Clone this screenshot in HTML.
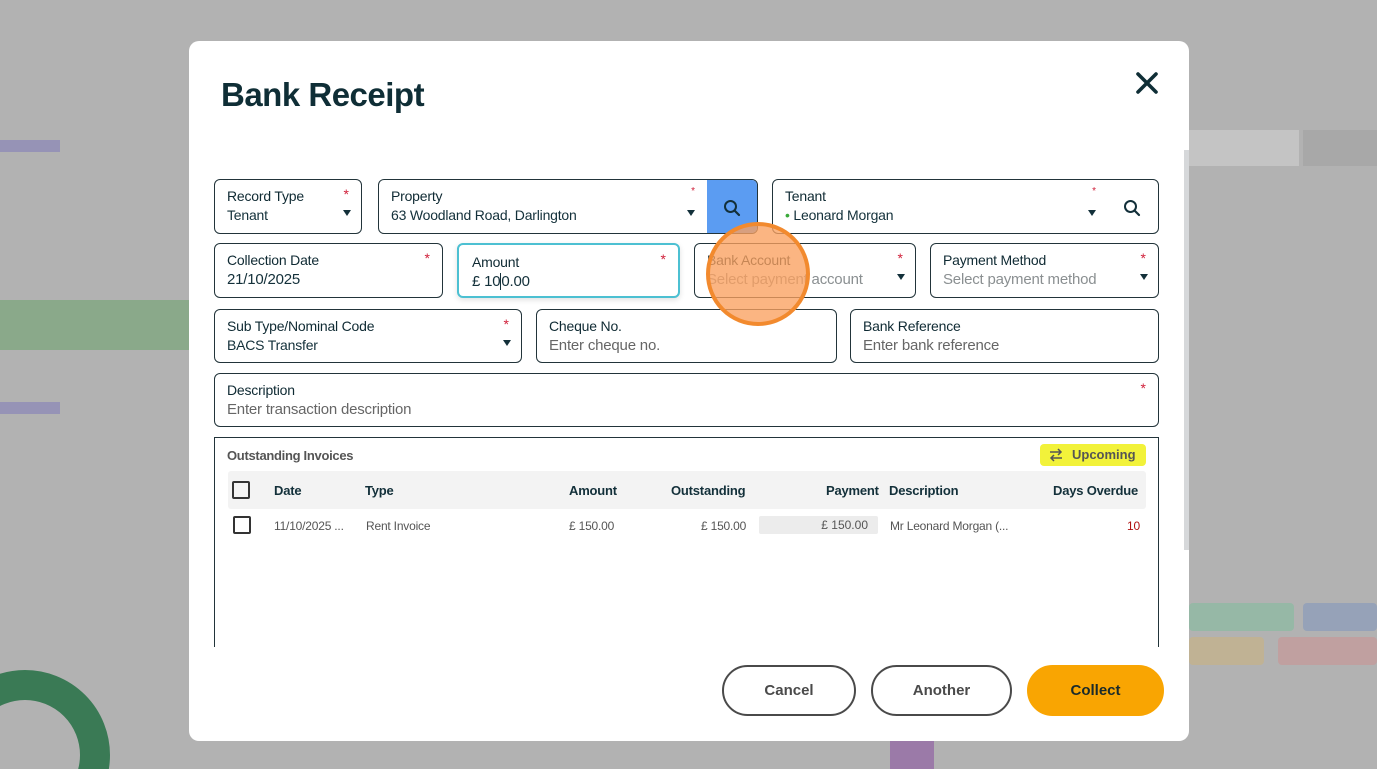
<!DOCTYPE html>
<html><head><meta charset="utf-8"><style>
*{box-sizing:border-box;margin:0;padding:0}
html,body{width:1377px;height:769px;overflow:hidden}
body{background:#b2b2b2;font-family:"Liberation Sans",sans-serif;color:#0f2e36}
#w{position:relative;width:1377px;height:769px;overflow:hidden}
.a{position:absolute}
.modal{left:189px;top:41px;width:1000px;height:700px;background:#fff;border-radius:10px}
.f{position:absolute;border:1px solid #22343a;border-radius:6px;background:#fff}
.lb{position:absolute;left:12px;top:8px;font-size:14px;color:#0f2a33;font-weight:500;letter-spacing:-.2px}
.vl{position:absolute;left:12px;top:27px;font-size:14px;color:#13303a;letter-spacing:-.2px}
.ph{color:#8a8f91;font-size:15px}
.st{position:absolute;right:12px;top:6px;color:#d0203a;font-size:14px}
.ar{position:absolute;right:10px;top:30px;width:0;height:0;border-left:4px solid transparent;border-right:4px solid transparent;border-top:6px solid #13303a}
.th{position:absolute;top:483px;font-size:13px;font-weight:bold;color:#13303a;letter-spacing:-.2px}
.td{position:absolute;top:519px;font-size:12px;color:#555;letter-spacing:-.2px}
.btn{position:absolute;top:665px;height:51px;border-radius:26px;border:2px solid #4a4a4a;font-size:15px;font-weight:bold;color:#4a4a4a;text-align:center;line-height:47px}
</style></head><body><div id="w">
<div class="a" style="left:0;top:300px;width:189px;height:50px;background:#8aa98a"></div>
<div class="a" style="left:0;top:140px;width:60px;height:12px;background:#8a86b8;opacity:.7"></div>
<div class="a" style="left:0;top:402px;width:60px;height:12px;background:#8a86b8;opacity:.7"></div>
<svg class="a" style="left:0;top:660px" width="189" height="109" viewBox="0 0 189 109"><circle cx="25" cy="95" r="70" fill="none" stroke="#3a7a55" stroke-width="30"/></svg>
<div class="a" style="left:1189px;top:603px;width:105px;height:28px;background:#96b8a6;border-radius:4px"></div>
<div class="a" style="left:1303px;top:603px;width:74px;height:28px;background:#96a2b8;border-radius:4px"></div>
<div class="a" style="left:1278px;top:637px;width:99px;height:28px;background:#c0a0a0;border-radius:4px"></div>
<div class="a" style="left:1189px;top:637px;width:75px;height:28px;background:#c0b294;border-radius:4px"></div>
<div class="a" style="left:1189px;top:130px;width:110px;height:36px;background:#c4c4c4"></div>
<div class="a" style="left:1303px;top:130px;width:74px;height:36px;background:#a8a8a8"></div>
<div class="a" style="left:890px;top:741px;width:44px;height:28px;background:#9b7aa8"></div>

<div class="a modal"></div>
<div class="a" style="left:1184px;top:150px;width:5px;height:400px;background:#d6d8da"></div>
<div class="a" style="left:221px;top:76px;font-size:33px;font-weight:bold;color:#0f2e36;letter-spacing:-.5px">Bank Receipt</div>
<svg class="a" style="left:1135px;top:71px" width="24" height="24" viewBox="0 0 24 24"><path d="M3 3L21 21M21 3L3 21" stroke="#0f2e36" stroke-width="3.6" stroke-linecap="round"/></svg>

<div class="f" style="left:214px;top:179px;width:148px;height:55px"><div class="lb">Record Type</div><div class="vl">Tenant</div><div class="st">*</div><div class="ar"></div></div>
<div class="f" style="left:378px;top:179px;width:380px;height:55px;overflow:hidden"><div class="lb">Property</div><div class="vl">63 Woodland Road, Darlington</div><div class="st" style="right:62px;font-size:10px">*</div><div class="ar" style="right:62px"></div>
<div class="a" style="right:0;top:0;width:50px;height:55px;background:#5b9cf2"><svg style="position:absolute;left:16px;top:19px" width="18" height="18" viewBox="0 0 18 18"><circle cx="7.5" cy="7.5" r="5.5" fill="none" stroke="#13303a" stroke-width="2"/><path d="M11.5 11.5L16 16" stroke="#13303a" stroke-width="2.2" stroke-linecap="round"/></svg></div></div>
<div class="f" style="left:772px;top:179px;width:387px;height:55px"><div class="lb">Tenant</div><div class="vl"><span style="color:#3aaa3a">•</span> Leonard Morgan</div><div class="st" style="right:62px;font-size:10px">*</div><div class="ar" style="right:62px"></div>
<svg style="position:absolute;right:17px;top:19px" width="18" height="18" viewBox="0 0 18 18"><circle cx="7.5" cy="7.5" r="5.5" fill="none" stroke="#13303a" stroke-width="2"/><path d="M11.5 11.5L16 16" stroke="#13303a" stroke-width="2.2" stroke-linecap="round"/></svg></div>

<div class="f" style="left:214px;top:243px;width:229px;height:55px"><div class="lb">Collection Date</div><div class="vl" style="font-size:15px">21/10/2025</div><div class="st">*</div></div>
<div class="f" style="left:457px;top:243px;width:223px;height:55px;border:2px solid #4cc0d2;box-shadow:0 2px 6px rgba(0,0,0,.12)"><div class="lb" style="left:13px;top:9px">Amount</div><div class="vl" style="left:13px;top:28px;font-size:15px">£ 10<span style="border-left:1px solid #13303a"></span>0.00</div><div class="st">*</div></div>
<div class="f" style="left:694px;top:243px;width:222px;height:55px"><div class="lb">Bank Account</div><div class="vl ph">Select payment account</div><div class="st">*</div><div class="ar"></div></div>
<div class="f" style="left:930px;top:243px;width:229px;height:55px"><div class="lb">Payment Method</div><div class="vl ph">Select payment method</div><div class="st">*</div><div class="ar"></div></div>

<div class="f" style="left:214px;top:309px;width:308px;height:54px"><div class="lb">Sub Type/Nominal Code</div><div class="vl">BACS Transfer</div><div class="st">*</div><div class="ar"></div></div>
<div class="f" style="left:536px;top:309px;width:301px;height:54px"><div class="lb">Cheque No.</div><div class="vl ph" style="color:#666">Enter cheque no.</div></div>
<div class="f" style="left:850px;top:309px;width:309px;height:54px"><div class="lb">Bank Reference</div><div class="vl ph" style="color:#666">Enter bank reference</div></div>

<div class="f" style="left:214px;top:373px;width:945px;height:54px"><div class="lb">Description</div><div class="vl ph" style="color:#666">Enter transaction description</div><div class="st">*</div></div>

<div class="a" style="left:214px;top:437px;width:945px;height:210px;border:1px solid #22343a;border-bottom:none"></div>
<div class="a" style="left:227px;top:448px;font-size:13px;color:#555;font-weight:bold;letter-spacing:-.3px">Outstanding Invoices</div>
<div class="a" style="left:1040px;top:444px;width:106px;height:22px;background:#f2f23a;border-radius:4px;font-size:13px;font-weight:bold;color:#555;line-height:22px;padding-left:32px">Upcoming
<svg style="position:absolute;left:9px;top:4px" width="14" height="14" viewBox="0 0 14 14"><path d="M1 4H12M9 1L12 4L9 7M13 10H2M5 7L2 10L5 13" fill="none" stroke="#555" stroke-width="1.5"/></svg></div>
<div class="a" style="left:228px;top:471px;width:918px;height:38px;background:#f3f3f3;border-radius:3px"></div>
<div class="a" style="left:232px;top:481px;width:18px;height:18px;border:2px solid #333;border-radius:2px"></div>
<div class="th" style="left:274px">Date</div><div class="th" style="left:365px">Type</div><div class="th" style="left:569px">Amount</div><div class="th" style="left:671px">Outstanding</div><div class="th" style="left:826px">Payment</div><div class="th" style="left:889px">Description</div><div class="th" style="left:1053px">Days Overdue</div>
<div class="a" style="left:233px;top:516px;width:18px;height:18px;border:2px solid #333;border-radius:2px"></div>
<div class="td" style="left:274px">11/10/2025 ...</div><div class="td" style="left:366px">Rent Invoice</div><div class="td" style="left:569px">£ 150.00</div><div class="td" style="left:701px">£ 150.00</div>
<div class="a" style="left:759px;top:516px;width:119px;height:18px;background:#ececec;border-radius:2px;font-size:12px;color:#555;text-align:right;padding-right:10px;line-height:18px">£ 150.00</div>
<div class="td" style="left:890px">Mr Leonard Morgan (...</div><div class="td" style="left:1127px;color:#b01010">10</div>

<div class="btn" style="left:722px;width:134px">Cancel</div>
<div class="btn" style="left:871px;width:141px">Another</div>
<div class="btn" style="left:1027px;width:137px;background:#f9a502;border-color:#f9a502;color:#1a2a2a">Collect</div>

<div class="a" style="left:706px;top:222px;width:104px;height:104px;border-radius:50%;background:rgba(250,160,95,.78);border:4px solid #f28a2e"></div>
</div></body></html>
